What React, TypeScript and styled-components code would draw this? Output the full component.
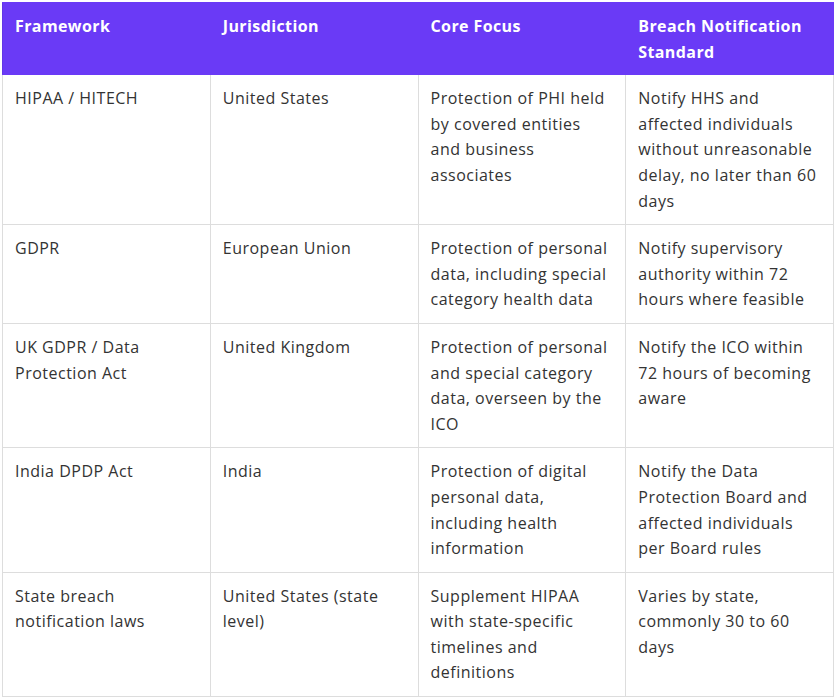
import styled, { createGlobalStyle } from 'styled-components';

const GlobalStyle = createGlobalStyle`
  body {
    margin: 0;
    background: #ffffff;
    font-family: 'Open Sans', 'Noto Sans', sans-serif;
    color: #333333;
  }
`;

const ROWS: [string, string, string, string][] = [
  [
    'HIPAA / HITECH',
    'United States',
    'Protection of PHI held by covered entities and business associates',
    'Notify HHS and affected individuals without unreasonable delay, no later than 60 days',
  ],
  [
    'GDPR',
    'European Union',
    'Protection of personal data, including special category health data',
    'Notify supervisory authority within 72 hours where feasible',
  ],
  [
    'UK GDPR / Data Protection Act',
    'United Kingdom',
    'Protection of personal and special category data, overseen by the ICO',
    'Notify the ICO within 72 hours of becoming aware',
  ],
  [
    'India DPDP Act',
    'India',
    'Protection of digital personal data, including health information',
    'Notify the Data Protection Board and affected individuals per Board rules',
  ],
  [
    'State breach notification laws',
    'United States (state level)',
    'Supplement HIPAA with state-specific timelines and definitions',
    'Varies by state, commonly 30 to 60 days',
  ],
];

const HEADERS = ['Framework', 'Jurisdiction', 'Core Focus', 'Breach Notification Standard'];

export default function App() {
  return (
    <>
      <GlobalStyle />
      <Page>
        <Table>
          <thead>
            <tr>
              {HEADERS.map(h => (
                <HeadCell key={h}>{h}</HeadCell>
              ))}
            </tr>
          </thead>
          <tbody>
            {ROWS.map(row => (
              <tr key={row[0]}>
                {row.map((cell, i) => (
                  <Cell key={i}>{cell}</Cell>
                ))}
              </tr>
            ))}
          </tbody>
        </Table>
      </Page>
    </>
  );
}

const Page = styled.div`
  padding: 2px 1px 0 2px;
`;

const Table = styled.table`
  width: 832px;
  border-collapse: collapse;
  table-layout: fixed;
`;

const HeadCell = styled.th`
  background: #6a3af6;
  color: #ffffff;
  font-weight: 700;
  font-size: 16px;
  letter-spacing: 0.4px;
  line-height: 25.6px;
  text-align: left;
  vertical-align: top;
  padding: 11px 13px 9px 12px;
  border: 1px solid #6a3af6;
  border-left-color: #6236e6;
`;

const Cell = styled.td`
  font-size: 16px;
  letter-spacing: 0.5px;
  line-height: 25.6px;
  vertical-align: top;
  padding: 11px 13px 10px 12px;
  border: 1px solid #dddddd;
  color: #333333;
`;
